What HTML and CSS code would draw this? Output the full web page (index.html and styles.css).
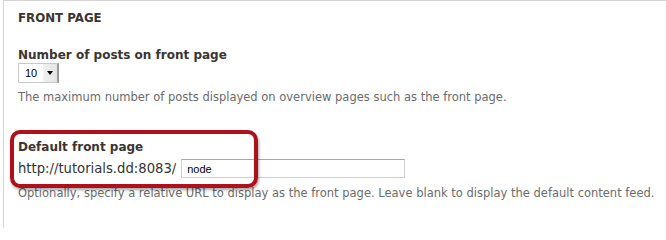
FILE: index.html
```html
<!DOCTYPE html>
<html>
<head>
<meta charset="utf-8">
<link rel="stylesheet" href="styles.css">
</head>
<body>
<div class="fieldset">
  <div class="legend">FRONT PAGE</div>
  <div class="item item-posts">
    <label class="label">Number of posts on front page</label>
    <div class="select">
      <span class="select-value">10</span>
      <span class="select-arrow"></span>
    </div>
    <div class="desc">The maximum number of posts displayed on overview pages such as the front page.</div>
  </div>
  <div class="item item-front">
    <label class="label">Default front page</label>
    <div class="url-row">
      <span class="prefix">http://tutorials.dd:8083/</span>
      <input class="text-input" type="text" value="node">
    </div>
    <div class="desc">Optionally, specify a relative URL to display as the front page. Leave blank to display the default content feed.</div>
    <div class="highlight"></div>
  </div>
</div>
</body>
</html>
```
FILE: styles.css
```css
html, body {
  margin: 0;
  padding: 0;
  background: #fff;
}
body {
  width: 666px;
  height: 228px;
  overflow: hidden;
  font-family: "DejaVu Sans", Verdana, sans-serif;
  color: #333;
}
.fieldset {
  box-sizing: border-box;
  margin-left: 3px;
  border-top: 1px solid #d4d4d4;
  border-left: 1px solid #d4d4d4;
  padding: 10px 0 0 14px;
  height: 228px;
}
.legend {
  font-size: 11.8px;
  font-weight: bold;
  color: #3a3530;
  line-height: 14px;
}
.item {
  position: relative;
}
.item-posts {
  margin-top: 22px;
}
.label {
  display: block;
  font-size: 12px;
  font-weight: bold;
  color: #3a3530;
  line-height: 16px;
}
.select {
  display: flex;
  align-items: center;
  width: 38px;
  height: 18px;
  margin-top: 0;
  border: 1px solid #c8c8c8;
  border-right: 2px solid #9a9a9a;
  background: linear-gradient(to right, #fff 0, #fff 24px, #f0f0f0 24px, #e4e4e4 100%);
  font-family: "Liberation Sans", Arial, sans-serif;
  font-size: 11px;
  color: #000;
}
.select-value {
  padding-left: 6px;
  width: 18px;
}
.select-arrow {
  margin-left: 4px;
  width: 0;
  height: 0;
  border-left: 3.5px solid transparent;
  border-right: 3.5px solid transparent;
  border-top: 4px solid #000;
}
.desc {
  font-size: 11.5px;
  color: #6b6b6b;
  line-height: 16px;
  margin-top: 6px;
}
.item-front {
  margin-top: 34px;
}
.url-row {
  display: flex;
  align-items: center;
  margin-top: 4px;
  gap: 5px;
}
.prefix {
  font-size: 13.2px;
  color: #333;
}
.text-input {
  box-sizing: border-box;
  width: 224px;
  height: 19px;
  margin: 0;
  padding: 0 5px;
  border: 1px solid #d0d0d0;
  border-top-color: #a8a8a8;
  font-family: "Liberation Sans", Arial, sans-serif;
  font-size: 11px;
  color: #000;
  background: #fff;
}
.item-front .desc {
  margin-top: 7px;
}
.highlight {
  position: absolute;
  left: -8px;
  top: -9px;
  width: 240px;
  height: 50px;
  border: 4px solid #b0101c;
  border-radius: 10px;
  box-shadow: 1px 2px 3px rgba(0,0,0,0.35);
}
```
